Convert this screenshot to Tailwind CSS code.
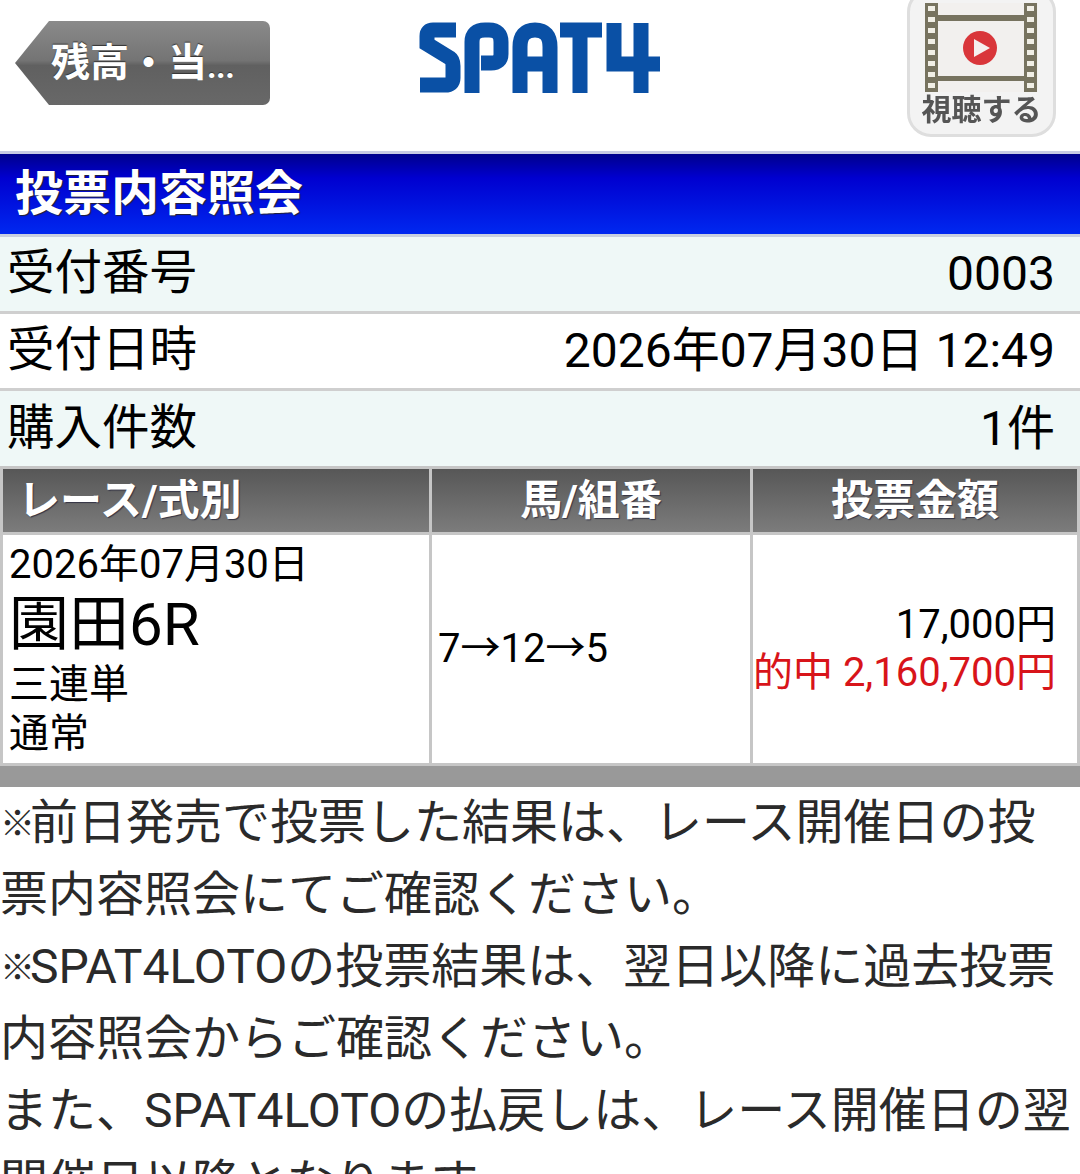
<!DOCTYPE html>
<html lang="ja"><head><meta charset="utf-8">
<script src="https://cdn.jsdelivr.net/npm/@tailwindcss/browser@4"></script>
</head>
<body class="m-0 bg-white">
<div class="w-[1080px] h-[1174px] overflow-hidden bg-white text-black font-['Roboto','Noto_Sans_CJK_JP',sans-serif]">
  <header class="h-[151px] flex items-start relative overflow-hidden">
    <div class="ml-[15px] mt-[21px] w-[255px] h-[84px] flex items-center pl-[36px] text-white text-[39px] font-bold rounded-r-[7px] bg-[linear-gradient(#8a8a8a,#747474_47%,#606060_53%,#686868)] [clip-path:polygon(34px_0,100%_0,100%_100%,34px_100%,0_50%)] [text-shadow:0_-1px_1px_#333]">残高・当<span class="text-[33px] mt-[8px] tracking-[-0.5px]">...</span></div>
    <svg class="ml-[149px] mt-[22px] blur-[0.6px]" width="242" height="72" viewBox="0 0 242 72" fill="none" stroke="#0a50a5" stroke-width="15">
      <path d="M37 8H14Q8 8 8 14V22L31 36Q34 38 34 44V56Q34 63 26 63H1"/>
      <path d="M53 71V20Q53 8 66 8H70Q82 8 82 20V32Q82 41 72 41H62"/>
      <path d="M101 71V25Q101 8 116 8Q131 8 131 25V71M101 42H131"/>
      <path d="M141 8H183M161 8V71"/>
      <path d="M195 1V42H241M222 1V71"/>
    </svg>
    <div class="absolute left-[907px] top-[-12px] w-[149px] h-[149px] rounded-[24px] bg-[#f3f3f3] border-[3px] border-[#dedede] blur-[0.7px] flex flex-col items-center">
      <svg class="mt-[12px] shrink-0" width="113" height="89" viewBox="0 0 113 89">
        <rect x="0" y="0" width="113" height="89" fill="#f2f0ee"/>
        <rect x="0" y="0" width="13" height="89" fill="#77735f"/>
        <rect x="99" y="0" width="13" height="89" fill="#77735f"/>
        <g fill="#f1efe6"><rect x="3" y="3" width="7" height="5"/><rect x="3" y="14" width="7" height="5"/><rect x="3" y="25" width="7" height="5"/><rect x="3" y="36" width="7" height="5"/><rect x="3" y="47" width="7" height="5"/><rect x="3" y="58" width="7" height="5"/><rect x="3" y="69" width="7" height="5"/><rect x="3" y="80" width="7" height="5"/><rect x="102" y="3" width="7" height="5"/><rect x="102" y="14" width="7" height="5"/><rect x="102" y="25" width="7" height="5"/><rect x="102" y="36" width="7" height="5"/><rect x="102" y="47" width="7" height="5"/><rect x="102" y="58" width="7" height="5"/><rect x="102" y="69" width="7" height="5"/><rect x="102" y="80" width="7" height="5"/></g>
        <rect x="13" y="12" width="86" height="6" fill="#77735f"/>
        <rect x="13" y="73" width="86" height="5" fill="#77735f"/>
        <circle cx="55" cy="45" r="17" fill="#d9363a"/>
        <path d="M49 36L65 45L49 54Z" fill="#f5f0ee"/>
      </svg>
      <div class="text-[30px] leading-[36px] font-bold text-[#555] whitespace-nowrap">視聴する</div>
    </div>
  </header>
  <div class="h-[83px] border-t-[3px] border-[#c8cbe4] bg-[linear-gradient(#00008c,#0000d0_30%,#0028f0)] flex items-center pl-[15px] text-white text-[48px] font-bold [text-shadow:1px_1px_1px_#223]">投票内容照会</div>
  <div class="border-t-[3px] border-[#c8d0e0] h-[77px] bg-[#eff8f7] flex items-center justify-between pl-[7px] pr-[25px] text-[48px]"><span class="text-[47.5px]">受付番号</span><span>0003</span></div>
  <div class="border-t-[3px] border-[#cfcfcf] h-[77px] bg-white flex items-center justify-between pl-[7px] pr-[25px] text-[48px]"><span class="text-[47.5px]">受付日時</span><span>2026年07月30日 12:49</span></div>
  <div class="border-t-[3px] border-[#cfcfcf] h-[78px] bg-[#eff8f7] flex items-center justify-between pl-[7px] pr-[25px] text-[48px]"><span class="text-[47.5px]">購入件数</span><span>1件</span></div>
  <div class="grid grid-cols-[426px_318px_324px] gap-[3px] p-[3px] bg-[#c6c6c6]">
    <div class="h-[63px] flex items-center pl-[15px] text-white text-[42px] font-bold bg-[linear-gradient(#575757,#7c7c7c)] [text-shadow:1px_1px_1px_#334]">レース/式別</div>
    <div class="h-[63px] flex items-center justify-center text-white text-[42px] font-bold bg-[linear-gradient(#575757,#7c7c7c)] [text-shadow:1px_1px_1px_#334]">馬/組番</div>
    <div class="h-[63px] flex items-center justify-center text-white text-[42px] font-bold bg-[linear-gradient(#575757,#7c7c7c)] [text-shadow:1px_1px_1px_#334]">投票金額</div>
    <div class="h-[228px] bg-white pl-[6px] pt-[5px]">
      <div class="text-[40px] leading-[50px]">2026年07月30日</div>
      <div class="text-[60px] leading-[70px]">園田6R</div>
      <div class="text-[40px] leading-[49px]">三連単</div>
      <div class="text-[40px] leading-[49px]">通常</div>
    </div>
    <div class="h-[228px] bg-white flex items-center pl-[6px] text-[40px]">7→12→5</div>
    <div class="h-[228px] bg-white flex flex-col justify-center items-end pr-[21px] text-[40px] leading-[48px] whitespace-nowrap">
      <div>17,000円</div>
      <div class="text-[#d8141a]">的中 2,160,700円</div>
    </div>
  </div>
  <div class="h-[21px] bg-[#999]"></div>
  <div class="text-[48px] leading-[72px] text-[#2a2a2a]">
    <p><span class="text-[35px] leading-none font-bold tracking-[-5px] align-[3px]">※</span>前日発売で投票した結果は、レース開催日の投票内容照会にてご確認ください。</p>
    <p><span class="text-[35px] leading-none font-bold tracking-[-5px] align-[3px]">※</span>SPAT4LOTOの投票結果は、翌日以降に過去投票内容照会からご確認ください。</p>
    <p>また、SPAT4LOTOの払戻しは、レース開催日の翌開催日以降となります。</p>
  </div>
</div>
</body></html>
